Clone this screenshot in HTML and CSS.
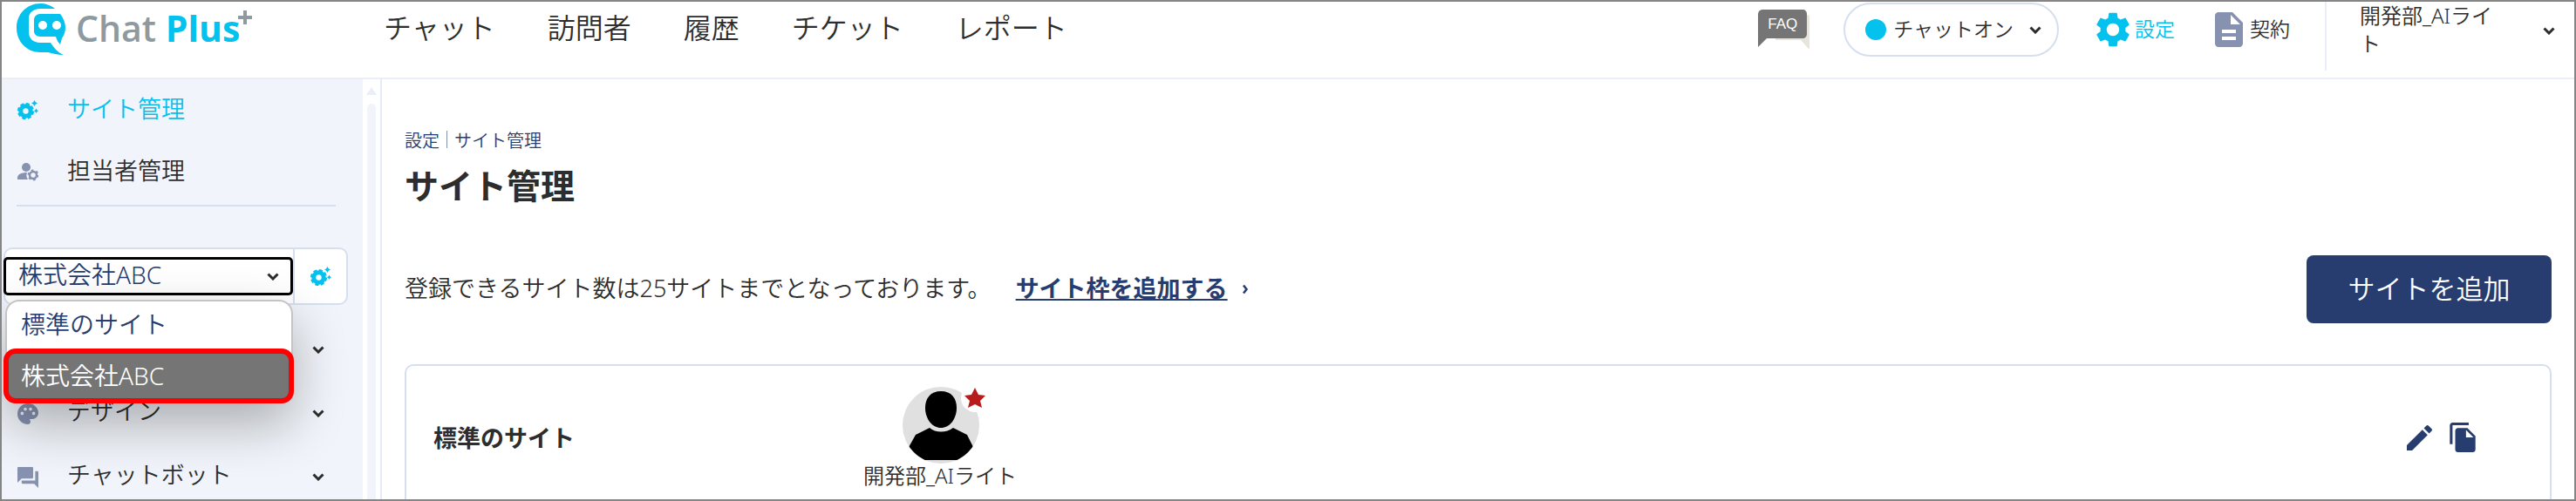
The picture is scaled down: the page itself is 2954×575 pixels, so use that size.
FILE: index.html
```
<!DOCTYPE html>
<html lang="ja">
<head>
    <meta charset="UTF-8">
    <meta name="viewport" content="width=device-width, initial-scale=1.0">
    <title>サイト管理</title>
    <link rel="stylesheet" href="styles.css">
</head>
<body>

<!-- shared icons -->
<svg class="sprite" aria-hidden="true">
    <symbol id="chevron" viewBox="0 0 14 9">
        <path d="M1.5 1.5 L7 7 L12.5 1.5" fill="none" stroke="currentColor" stroke-width="3"/>
    </symbol>
    <symbol id="gear" viewBox="2 2 20 20">
        <path d="M19.14 12.94c.04-.3.06-.61.06-.94 0-.32-.02-.64-.07-.94l2.03-1.58c.18-.14.23-.41.12-.61l-1.92-3.32c-.12-.22-.37-.29-.59-.22l-2.39.96c-.5-.38-1.03-.7-1.62-.94l-.36-2.54c-.04-.24-.24-.41-.48-.41h-3.84c-.24 0-.43.17-.47.41l-.36 2.54c-.59.24-1.13.57-1.62.94l-2.39-.96c-.22-.08-.47 0-.59.22L2.74 8.87c-.12.21-.08.47.12.61l2.03 1.58c-.05.3-.09.63-.09.94s.02.64.07.94l-2.03 1.58c-.18.14-.23.41-.12.61l1.92 3.32c.12.22.37.29.59.22l2.39-.96c.5.38 1.03.7 1.62.94l.36 2.54c.05.24.24.41.48.41h3.84c.24 0 .44-.17.47-.41l.36-2.54c.59-.24 1.13-.56 1.62-.94l2.39.96c.22.08.47 0 .59-.22l1.92-3.32c.12-.22.07-.47-.12-.61l-2.01-1.58zM12 15.6c-1.98 0-3.6-1.62-3.6-3.6s1.62-3.6 3.6-3.6 3.6 1.62 3.6 3.6-1.62 3.6-3.6 3.6z" fill="currentColor"/>
    </symbol>
    <symbol id="gear-spark" viewBox="0 0 24 22">
        <circle cx="9.500" cy="12.500" r="5.700" fill="none" stroke="currentColor" stroke-width="5"/>
        <circle cx="9.500" cy="12.500" r="8.300" fill="none" stroke="currentColor" stroke-width="2.600" stroke-dasharray="4.1 2.42"/>
        <path d="M19.500 0l1.300 2.200 2.200 1.300-2.200 1.300-1.300 2.200-1.300-2.200-2.200-1.300 2.200-1.300zM21.500 9.500l1 1.700 1.500 1-1.500 1-1 1.700-1-1.700-1.500-1 1.500-1z" fill="currentColor"/>
    </symbol>
</svg>

<div class="app">
    <header class="header">
        <a class="logo" href="#" aria-label="Chat Plus">
            <svg class="logo-mark" viewBox="0 0 56 60">
                <path d="M44 6C38 1 32 0 27 0 12 0 0 12 0 28c0 16 12 28 27 28h9c5 1 11 3 18 3-7-3-11-8-15-14H27c-8 0-13-5-13-12V17c0-7 6-11 13-11z" fill="#04c1ee"/>
                <path d="M27 12h23c3 4 6 9 6 16 0 5-2 9-4 12l-2 7c-2-2-4-5-5-9H27c-4 0-7-3-7-6V19c0-4 3-7 7-7z" fill="#04c1ee"/>
                <circle cx="30" cy="25" r="5" fill="#fff"/>
                <circle cx="46" cy="25" r="5" fill="#fff"/>
            </svg>
            <span class="logo-text">Chat <b>Plus</b></span>
            <svg class="logo-plus" viewBox="0 0 16 16"><path d="M8 0v16M0 8h16" stroke="#8e9a9f" stroke-width="4"/></svg>
        </a>
        <nav class="nav">
            <a href="#">チャット</a>
            <a href="#">訪問者</a>
            <a href="#">履歴</a>
            <a href="#">チケット</a>
            <a href="#">レポート</a>
        </nav>
        <div class="tools">
            <a class="faq" href="#">
                <svg viewBox="0 0 60 46">
                    <path d="M52 6h4c2 0 3 1 3 3v37L49 35H20v-2h32z" fill="#e6e4dc"/>
                    <path d="M6 0h45c3 0 5 2 5 5v23c0 3-2 5-5 5H10L0 43V6c0-4 2-6 6-6z" fill="#757575"/>
                </svg>
                <span>FAQ</span>
            </a>
            <button class="status" type="button">
                <span class="dot"></span><span class="label">チャットオン</span>
                <svg class="chevron"><use href="#chevron"/></svg>
            </button>
            <a class="tool tool-active" href="#"><svg class="tool-gear"><use href="#gear"/></svg><span class="label">設定</span></a>
            <a class="tool" href="#">
                <svg class="tool-doc" viewBox="4 2 16 20"><path d="M14 2H6c-1.100 0-2 .9-2 2v16c0 1.100.9 2 2 2h12c1.100 0 2-.9 2-2V8l-6-6zm2 16H8v-2h8v2zm0-4H8v-2h8v2zm-3-5V3.500L18.500 9H13z" fill="#8791b0"/></svg><span class="label">契約</span>
            </a>
        </div>
        <button class="user" type="button">
            <span>開発部_AIライト</span>
            <svg class="chevron"><use href="#chevron"/></svg>
        </button>
    </header>

    <div class="body">
        <aside class="sidebar">
            <div class="menu">
                <a class="menu-item active" href="#">
                    <svg class="menu-icon"><use href="#gear-spark"/></svg><span>サイト管理</span>
                </a>
                <a class="menu-item" href="#">
                    <svg class="menu-icon" viewBox="0 0 24 22">
                        <circle cx="10" cy="6" r="5" fill="currentColor"/>
                        <path d="M0 20v-2c0-4 5-6 11-6-1 3-1 5 1 8z" fill="currentColor"/>
                        <circle cx="18" cy="15" r="4" fill="none" stroke="currentColor" stroke-width="2.500"/>
                        <circle cx="18" cy="15" r="5.500" fill="none" stroke="currentColor" stroke-width="2" stroke-dasharray="2.500 3.260"/>
                    </svg><span>担当者管理</span>
                </a>
                <hr>
                <div class="site-picker">
                    <select aria-label="サイト">
                        <option>標準のサイト</option>
                        <option selected>株式会社ABC</option>
                    </select>
                    <svg class="chevron"><use href="#chevron"/></svg>
                    <button class="picker-gear" type="button" aria-label="設定"><svg class="menu-icon"><use href="#gear-spark"/></svg></button>
                    <div class="dropdown" role="listbox">
                        <button type="button" role="option">標準のサイト</button>
                        <button class="selected" type="button" role="option" aria-selected="true">株式会社ABC</button>
                    </div>
                </div>
                <a class="menu-item" href="#">
                    <svg class="chevron"><use href="#chevron"/></svg>
                </a>
                <a class="menu-item" href="#">
                    <svg class="menu-icon" viewBox="2 2 20 20"><path d="M12 2C6.490 2 2 6.490 2 12s4.490 10 10 10c1.380 0 2.500-1.120 2.500-2.500 0-.61-.23-1.200-.64-1.670-.08-.1-.13-.21-.13-.33 0-.28.22-.5.5-.5H16c3.310 0 6-2.690 6-6 0-4.960-4.490-9-10-9zm-5.500 11c-.83 0-1.500-.67-1.500-1.500S5.670 10 6.500 10s1.500.67 1.500 1.500S7.330 13 6.500 13zm3-4C8.670 9 8 8.330 8 7.500S8.670 6 9.500 6s1.500.67 1.500 1.500S10.330 9 9.500 9zm5 0c-.83 0-1.500-.67-1.500-1.500S13.670 6 14.500 6s1.500.67 1.500 1.500S15.330 9 14.500 9zm3 4c-.83 0-1.500-.67-1.500-1.500s.67-1.500 1.500-1.500 1.500.67 1.500 1.500-.67 1.500-1.500 1.500z" fill="currentColor"/></svg>
                    <span>デザイン</span>
                    <svg class="chevron"><use href="#chevron"/></svg>
                </a>
                <a class="menu-item" href="#">
                    <svg class="menu-icon" viewBox="2 2 20 20"><path d="M21 6h-2v9H6v2c0 .55.45 1 1 1h11l4 4V7c0-.55-.45-1-1-1zm-4 6V3c0-.55-.45-1-1-1H3c-.55 0-1 .45-1 1v14l4-4h10c.55 0 1-.45 1-1z" fill="currentColor"/></svg>
                    <span>チャットボット</span>
                    <svg class="chevron"><use href="#chevron"/></svg>
                </a>
            </div>
            <div class="scrollbar">
                <div class="scroll-arrow"></div>
                <div class="scroll-thumb"></div>
            </div>
        </aside>

        <main class="main">
            <div class="breadcrumb"><a href="#">設定</a><span class="sep"></span><a href="#">サイト管理</a></div>
            <h1>サイト管理</h1>
            <div class="notice">
                <p>登録できるサイト数は25サイトまでとなっております。</p>
                <a class="add-link" href="#">サイト枠を追加する</a>
                <svg class="arrow" viewBox="0 0 8 12"><path d="M2 1.500 L5.500 6 L2 10.500" fill="none" stroke="#273d70" stroke-width="2.500"/></svg>
                <button class="add-button" type="button">サイトを追加</button>
            </div>
            <section class="card">
                <h2>標準のサイト</h2>
                <div class="member">
                    <svg class="avatar" viewBox="0 0 96 88">
                        <clipPath id="round"><circle cx="44" cy="44" r="44"/></clipPath>
                        <g clip-path="url(#round)">
                            <rect width="88" height="88" fill="#e0e0e0"/>
                            <path d="M44 5c12 0 18 8 18 19 0 13-8 23-18 23s-18-10-18-23C26 13 32 5 44 5z" fill="#000"/>
                            <path d="M31 47c7 6 19 6 27 0l16 8 8 16v13H6V71l9-16z" fill="#000"/>
                        </g>
                        <circle cx="83" cy="13" r="16" fill="#fff"/>
                        <path d="M83 1l4 8 8 1-6 6 2 8-8-4-8 4 2-8-6-6 8-1z" fill="#b71c1c"/>
                    </svg>
                    <span>開発部_AIライト</span>
                </div>
                <div class="card-actions">
                    <button type="button" aria-label="編集"><svg class="pencil" viewBox="3 3 18 18"><path d="M3 17.250V21h3.750L17.810 9.940l-3.750-3.750L3 17.250zM20.710 7.040c.39-.39.39-1.020 0-1.410l-2.340-2.340c-.39-.39-1.020-.39-1.410 0l-1.830 1.830 3.750 3.750 1.830-1.830z" fill="currentColor"/></svg></button>
                    <button type="button" aria-label="コピー"><svg class="copy" viewBox="2 1 19 22"><path d="M16 1H4c-1.100 0-2 .9-2 2v14h2V3h12V1zm-1 4l6 6v10c0 1.100-.9 2-2 2H7.990C6.890 23 6 22.100 6 21l.01-14c0-1.100.89-2 1.990-2h7zm-1 7h5.500L14 6.500V12z" fill="currentColor"/></svg></button>
                </div>
            </section>
        </main>
    </div>
</div>

</body>
</html>
```
FILE: styles.css
```
* {
    box-sizing: border-box;
}

body {
    margin: 0;
    font-family: "Noto Sans", "Noto Sans CJK JP", sans-serif;
    font-size: 27px;
    font-weight: 350;
    color: #2d2d2d;
}

a {
    color: inherit;
    text-decoration: none;
}

button {
    padding: 0;
    border: none;
    background: none;
    color: inherit;
    font: inherit;
    cursor: pointer;
}

svg {
    display: block;
    flex-shrink: 0;
}

.sprite {
    position: absolute;
    width: 0;
    height: 0;
}

.chevron {
    width: 14px;
    height: 9px;
}

.app {
    display: flex;
    flex-direction: column;
    height: 100vh;
    overflow: hidden;
    border: 2px solid #858585;
}

/* header */
.header {
    display: flex;
    align-items: center;
    flex-shrink: 0;
    height: 89px;
    padding: 0 22px 23px 17px;
    border-bottom: 2px solid #e9eef8;
    font-size: 23px;
}

.logo {
    display: flex;
    align-items: center;
    width: 421px;
}

.logo-mark {
    width: 56px;
    height: 60px;
}

.logo-text {
    margin-left: 12px;
    padding-bottom: 4px;
    font-family: "Open Sans", sans-serif;
    font-size: 41px;
    font-weight: 600;
    line-height: 56px;
    color: #8e9a9f;
}

.logo-text b {
    font-weight: 700;
    color: #04c1ee;
}

.logo-plus {
    align-self: flex-start;
    width: 16px;
    height: 16px;
    margin: 8px 0 0 -2px;
}

.nav {
    display: flex;
    gap: 60px;
    padding-bottom: 4px;
    font-size: 32px;
    line-height: 56px;
    white-space: nowrap;
}

.tools {
    display: flex;
    align-items: center;
    margin-left: auto;
    white-space: nowrap;
}

.label {
    padding-bottom: 4px;
}

.faq {
    position: relative;
    width: 60px;
    height: 46px;
}

.faq span {
    position: absolute;
    top: 0;
    left: 0;
    width: 56px;
    font: 17px/34px "Liberation Sans", sans-serif;
    text-align: center;
    color: #fff;
}

.status {
    display: flex;
    align-items: center;
    height: 62px;
    margin: 0 42px 0 38px;
    padding: 0 18px 0 23px;
    border: 2px solid #d5dff0;
    border-radius: 31px;
}

.status .chevron {
    margin-left: 18px;
}

.dot {
    width: 24px;
    height: 24px;
    margin-right: 8px;
    border-radius: 50%;
    background: #04c1ee;
}

.tool {
    display: flex;
    align-items: center;
    gap: 5px;
}

.tool-active {
    margin-right: 46px;
    color: #04c1ee;
}

.tool-gear {
    width: 40px;
    height: 40px;
}

.tool-doc {
    width: 32px;
    height: 40px;
    margin-right: 3px;
}

.user {
    display: flex;
    align-items: center;
    align-self: flex-start;
    justify-content: space-between;
    width: 264px;
    height: 79px;
    margin-left: 40px;
    padding: 0 0 13px 38px;
    border-left: 2px solid #e9eef8;
    font-size: 24px;
    line-height: 32px;
    text-align: left;
}

.user span {
    width: 162px;
    padding-bottom: 2px;
    word-break: break-all;
}

/* sidebar */
.body {
    display: flex;
    flex: 1;
    min-height: 0;
}

.sidebar {
    display: flex;
    flex-shrink: 0;
    width: 436px;
    border-right: 2px solid #e4eaf6;
}

.menu {
    flex: 1;
    background: #f1f4fa;
}

.menu-item {
    display: flex;
    align-items: center;
    height: 73px;
    padding: 0 44px 0 18px;
}

.menu-item:first-child {
    height: 69px;
}

.menu-item span {
    margin-left: 33px;
    padding-bottom: 4px;
}

.site-picker ~ .menu-item span {
    padding-bottom: 8px;
}

.menu-item .chevron {
    margin-left: auto;
}

.menu-icon {
    width: 24px;
    height: 24px;
    color: #8791b0;
}

.active,
.active .menu-icon,
.picker-gear .menu-icon {
    color: #04c1ee;
}

.menu hr {
    height: 2px;
    margin: 2px 31px 47px 17px;
    border: none;
    background: #d5dff0;
}

.site-picker {
    position: relative;
    display: flex;
    align-items: center;
    height: 66px;
    margin: 0 17px 15px 2px;
    border: 2px solid #d5dff0;
    border-radius: 10px;
    background: #fff;
}

.site-picker select {
    flex: 1;
    height: 44px;
    margin-left: -2px;
    padding: 0 14px 4px;
    appearance: none;
    border: 3px solid #000;
    border-radius: 5px;
    background: #fff;
    color: #273d70;
    font: inherit;
    font-size: 28px;
    line-height: 34px;
}

.site-picker > .chevron {
    position: absolute;
    top: 27px;
    right: 77px;
}

.picker-gear {
    display: flex;
    align-items: center;
    justify-content: center;
    width: 61px;
    height: 62px;
    border-left: 2px solid #d5dff0;
}

.dropdown {
    position: absolute;
    top: 58px;
    left: 0;
    z-index: 1;
    width: 330px;
    height: 118px;
    border: 2px solid #c4c4c4;
    border-radius: 16px;
    background: #fff;
    box-shadow: 0 24px 60px rgba(0, 0, 0, 0.3);
    font-size: 28px;
}

.dropdown button {
    display: block;
    width: 100%;
    height: 54px;
    padding: 0 16px 4px;
    text-align: left;
    color: #273d70;
}

.dropdown .selected {
    width: 333px;
    height: 63px;
    margin-left: -4px;
    padding: 0 14px 4px;
    border: 6px solid #f00;
    border-radius: 14px;
    background: #757575;
    color: #fff;
}

.scrollbar {
    width: 20px;
    padding: 9px 5px 0;
    background: #fff;
}

.scroll-arrow {
    width: 0;
    margin-left: -1px;
    border: 6px solid transparent;
    border-top: none;
    border-bottom: 9px solid #e9eef8;
}

.scroll-thumb {
    height: 100%;
    margin-top: 10px;
    border-radius: 5px;
    background: #f1f4fa;
}

/* content */
.main {
    flex: 1;
    padding: 54px 26px 0 26px;
}

.breadcrumb {
    display: flex;
    align-items: center;
    height: 30px;
    font-size: 20px;
    color: #273d70;
}

.sep {
    width: 1px;
    height: 20px;
    margin: 0 8px;
    background: #8791b0;
}

h1 {
    margin: 8px 0 50px;
    font-size: 39px;
    line-height: 60px;
}

.notice {
    display: flex;
    align-items: center;
    height: 78px;
}

.notice p {
    margin: 0;
    padding-bottom: 6px;
}

.add-link {
    margin-left: 28px;
    padding-bottom: 6px;
    font-weight: 700;
    color: #273d70;
    text-decoration: underline;
}

.arrow {
    width: 8px;
    height: 12px;
    margin-left: 16px;
}

.add-button {
    width: 281px;
    height: 78px;
    margin-left: auto;
    padding-bottom: 6px;
    border-radius: 8px;
    background: #273d70;
    color: #fff;
    font-size: 31px;
}

.card {
    display: flex;
    align-items: center;
    height: 168px;
    margin-top: 47px;
    padding: 0 85px 2px 31px;
    border: 2px solid #d5dff0;
    border-bottom: none;
    border-radius: 10px 10px 0 0;
}

h2 {
    width: 493px;
    margin: 0;
    padding-bottom: 2px;
    font-size: 27px;
}

.member {
    display: flex;
    flex-direction: column;
    align-items: center;
    font-size: 24px;
    line-height: 28px;
}

.avatar {
    width: 96px;
    height: 88px;
    margin-left: 10px;
}

.card-actions {
    display: flex;
    align-items: center;
    gap: 20px;
    margin-left: auto;
    color: #273d70;
}

.pencil {
    width: 29px;
    height: 29px;
}

.copy {
    width: 30px;
    height: 34px;
}
```
